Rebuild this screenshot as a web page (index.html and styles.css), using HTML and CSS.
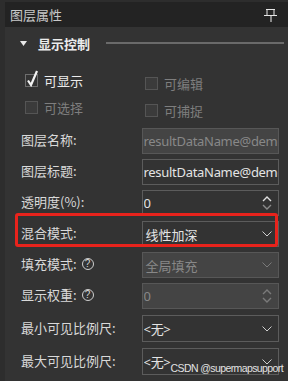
FILE: index.html
```html
<!DOCTYPE html>
<html>
<head>
<meta charset="utf-8">
<link rel="stylesheet" href="styles.css">
</head>
<body>
<div class="panel">
  <div class="titlebar">
    <span class="title">图层属性</span>
    <svg class="pin" width="14" height="14" viewBox="0 0 14 14">
      <path d="M2 1.5H11M3 1.5V7M10 1.5V7M0 7.5H13" stroke="#e6e6e6" stroke-width="1" fill="none"/>
      <rect x="6" y="8" width="2" height="6" fill="#8a8a8a"/>
    </svg>
  </div>
  <div class="content">
    <div class="section">
      <svg class="tri" width="7" height="5" viewBox="0 0 7 5"><path d="M0 0H7L3.5 5Z" fill="#e8e8e8"/></svg>
      <span class="section-title">显示控制</span>
      <span class="section-line"></span>
    </div>
    <div class="checks">
      <div class="check on">
        <span class="box"><svg class="tick" width="13" height="17" viewBox="0 0 13 17"><path d="M2 10.5L5 15L11 1" stroke="#f2f2f2" stroke-width="2.2" fill="none"/></svg></span>
        <span>可显示</span>
      </div>
      <div class="check off col2"><span class="box"></span><span>可编辑</span></div>
      <div class="check off"><span class="box"></span><span>可选择</span></div>
      <div class="check off col2"><span class="box"></span><span>可捕捉</span></div>
    </div>
    <div class="form">
      <div class="row">
        <span class="label">图层名称:</span>
        <div class="field disabled plain"><span class="val">resultDataName@demo</span></div>
      </div>
      <div class="row">
        <span class="label">图层标题:</span>
        <div class="field plain"><span class="val">resultDataName@demo</span></div>
      </div>
      <div class="row">
        <span class="label">透明度(%):</span>
        <div class="field"><span class="val">0</span>
          <svg class="spin" width="10" height="14" viewBox="0 0 10 14"><path d="M1 5L5 1L9 5" stroke="#e0e0e0" stroke-width="1.4" fill="none"/><path d="M1 9L5 13L9 9" stroke="#8a8a8a" stroke-width="1.4" fill="none"/></svg>
        </div>
      </div>
      <div class="row highlight">
        <span class="label">混合模式:</span>
        <div class="field"><span class="val cjk">线性加深</span>
          <svg class="chev" width="10" height="6" viewBox="0 0 10 6"><path d="M0.5 0.5L5 5L9.5 0.5" stroke="#cfcfcf" stroke-width="1" fill="none"/></svg>
        </div>
        <span class="redbox"></span>
      </div>
      <div class="row">
        <span class="label">填充模式: <span class="help">?</span></span>
        <div class="field disabled"><span class="val cjk">全局填充</span>
          <svg class="chev" width="10" height="6" viewBox="0 0 10 6"><path d="M0.5 0.5L5 5L9.5 0.5" stroke="#7a7a7a" stroke-width="1" fill="none"/></svg>
        </div>
      </div>
      <div class="row">
        <span class="label">显示权重: <span class="help">?</span></span>
        <div class="field disabled"><span class="val">0</span>
          <svg class="spin" width="10" height="14" viewBox="0 0 10 14"><path d="M1 5L5 1L9 5" stroke="#7a7a7a" stroke-width="1.4" fill="none"/><path d="M1 9L5 13L9 9" stroke="#7a7a7a" stroke-width="1.4" fill="none"/></svg>
        </div>
      </div>
      <div class="row tall">
        <span class="label">最小可见比例尺:</span>
        <div class="field"><span class="val">&lt;无&gt;</span>
          <svg class="chev" width="10" height="6" viewBox="0 0 10 6"><path d="M0.5 0.5L5 5L9.5 0.5" stroke="#cfcfcf" stroke-width="1" fill="none"/></svg>
        </div>
      </div>
      <div class="row tall">
        <span class="label">最大可见比例尺:</span>
        <div class="field"><span class="val">&lt;无&gt;</span>
          <svg class="chev" width="10" height="6" viewBox="0 0 10 6"><path d="M0.5 0.5L5 5L9.5 0.5" stroke="#cfcfcf" stroke-width="1" fill="none"/></svg>
        </div>
      </div>
    </div>
  </div>
  <div class="watermark">CSDN @supermapsupport</div>
</div>
</body>
</html>
```

FILE: styles.css
```css
html, body {
  margin: 0;
  padding: 0;
  background: #2d2d2d;
  width: 288px;
  height: 381px;
  overflow: hidden;
}
body {
  font-family: "Noto Sans", "Noto Sans CJK SC", sans-serif;
  font-size: 13px;
}
.panel {
  position: relative;
  height: 381px;
  padding-top: 2px;
  padding-left: 5px;
  box-sizing: border-box;
}
.titlebar {
  height: 25px;
  background: #232323;
  display: flex;
  align-items: center;
  justify-content: space-between;
  padding: 0 10px 0 5px;
}
.title {
  color: #c9c9c9;
  font-family: "Noto Sans CJK SC", sans-serif;
  font-size: 13px;
  line-height: 1;
}
.pin {
  display: block;
  margin-top: 1px;
}
.content {
  background: #333333;
  height: 354px;
  padding: 8px 9px 0 15px;
  box-sizing: border-box;
}
.section {
  height: 16px;
  display: flex;
  align-items: center;
}
.tri {
  display: block;
}
.section-title {
  margin-left: 11px;
  color: #ececec;
  font-family: "Noto Sans CJK SC", sans-serif;
  font-weight: bold;
  font-size: 13px;
  line-height: 1;
}
.section-line {
  flex: 1;
  height: 2px;
  background: #6a6a6a;
  margin-left: 16px;
  margin-right: -5px;
}
.checks {
  display: grid;
  grid-template-columns: 120px auto;
  grid-auto-rows: 20px;
  row-gap: 7px;
  margin: 19px 0 0 5px;
}
.check {
  display: flex;
  align-items: center;
  font-family: "Noto Sans CJK SC", sans-serif;
  font-size: 13px;
  height: 20px;
}
.check.col2 {
  margin-top: 3px;
}
.box {
  position: relative;
  width: 13px;
  height: 13px;
  box-sizing: border-box;
  border: 1px solid #5d5d5d;
  background: #3a3a3a;
  margin-right: 6px;
}
.check.on {
  color: #ececec;
}
.check.on .box {
  border-color: #6e6e6e;
  background: #333;
}
.check.off {
  color: #7e7e7e;
}
.check.off .box {
  border-color: #555;
  background: #3b3b3b;
}
.tick {
  position: absolute;
  left: 0;
  top: -5px;
}
.form {
  margin-top: 11px;
  display: flex;
  flex-direction: column;
  gap: 5px;
}
.row {
  position: relative;
  display: flex;
  align-items: center;
  height: 26px;
}
.row.tall {
  height: 27px;
  margin-top: 1px;
}
.label {
  width: 121px;
  color: #d9d9d9;
  font-family: "Noto Sans CJK SC", sans-serif;
  font-size: 13px;
  margin-left: 1px;
  margin-top: -3px;
  display: flex;
  align-items: center;
}
.help {
  display: inline-flex;
  align-items: center;
  justify-content: center;
  width: 12px;
  height: 12px;
  box-sizing: border-box;
  border: 1px solid #cfcfcf;
  border-radius: 50%;
  font-family: "Liberation Sans", sans-serif;
  font-size: 10px;
  color: #d6d6d6;
  margin-left: 5px;
}
.field {
  width: 138px;
  height: 100%;
  box-sizing: border-box;
  border: 1px solid #5c5c5c;
  background: #333333;
  color: #e4e4e4;
  display: flex;
  align-items: center;
  padding: 0 6px 0 1px;
  overflow: hidden;
  white-space: nowrap;
}
.field.plain {
  padding-right: 0;
}
.field.disabled {
  background: #444444;
  border-color: #575757;
  color: #888888;
}
.val {
  flex: 1;
  overflow: hidden;
  white-space: nowrap;
  font-family: "Noto Sans", "Noto Sans CJK SC", sans-serif;
  font-size: 13px;
  letter-spacing: -0.3px;
}
.val.cjk {
  padding-left: 2px;
  letter-spacing: 0;
  font-family: "Noto Sans CJK SC", sans-serif;
}
.chev, .spin {
  flex: none;
  display: block;
}
.redbox {
  position: absolute;
  left: -5px;
  top: -8px;
  right: 1px;
  bottom: 0;
  border: 3px solid #e8231c;
  border-radius: 3px;
}
.watermark {
  position: absolute;
  right: 5px;
  bottom: 8px;
  font-family: "Liberation Sans", sans-serif;
  font-size: 10.5px;
  letter-spacing: -0.6px;
  color: #e2e2e2;
  line-height: 1;
}
```
